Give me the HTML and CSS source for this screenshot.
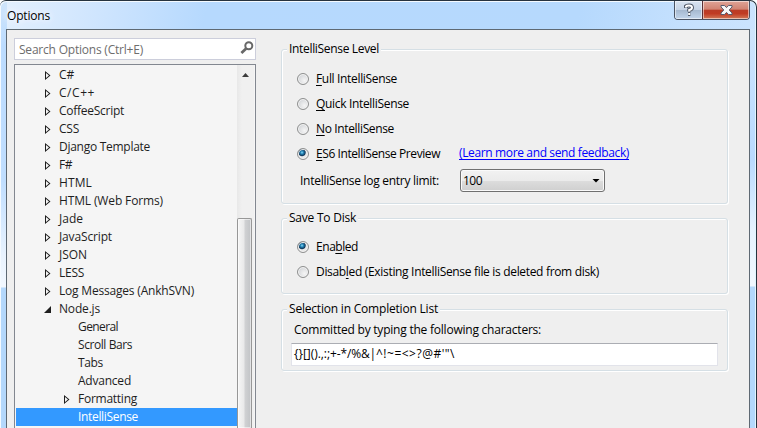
FILE: index.html
```
<!DOCTYPE html>
<html lang="en">
<head>
<meta charset="utf-8">
<title>Options</title>
<link rel="stylesheet" href="styles.css">
</head>
<body>
<div class="window">
  <header class="titlebar">
    <h1 class="t" data-w="43">Options</h1>
    <div class="caption">
      <button class="help" aria-label="Help"><svg width="12" height="14" viewBox="0 0 12 14"><path d="M3 5V3.2Q3.6 2.4 6 2.4Q9 2.4 9 4.7Q9 6.2 6.2 7V8.6M5 11H7.4" fill="none" stroke="#525a69" stroke-width="4"/><path d="M3 4.6V3.4Q3.6 2.4 6 2.4Q9 2.4 9 4.7Q9 6.2 6.2 7V8.4M5.2 11H7.2" fill="none" stroke="#fff" stroke-width="2"/></svg></button>
      <button class="close" aria-label="Close"><svg width="13" height="12" viewBox="0 0 13 12"><path d="M1 1.5H4.5L6.5 3.6L8.5 1.5H12V3L9.2 6L12 9V10.5H8.5L6.5 8.4L4.5 10.5H1V9L3.8 6L1 3Z" fill="#f7f7f7" stroke="#575a6c"/></svg></button>
    </div>
  </header>
  <main class="client">
    <aside class="sidebar">
      <div class="search"><span class="t" data-w="124">Search Options (Ctrl+E)</span><svg width="14" height="14" viewBox="0 0 14 14"><circle cx="8.8" cy="4.8" r="3.5" fill="none" stroke="#686868" stroke-width="2"/><path d="M6.2 7.5L1.4 12" stroke="#686868" stroke-width="2.8"/></svg></div>
      <div class="tree">
        <ul>
          <li><i></i><span class="t" data-w="15">C#</span></li>
          <li><i></i><span class="t" data-w="36">C/C++</span></li>
          <li><i></i><span class="t" data-w="65">CoffeeScript</span></li>
          <li><i></i><span class="t" data-w="20">CSS</span></li>
          <li><i></i><span class="t" data-w="91">Django Template</span></li>
          <li><i></i><span class="t" data-w="13">F#</span></li>
          <li><i></i><span class="t" data-w="33">HTML</span></li>
          <li><i></i><span class="t" data-w="104">HTML (Web Forms)</span></li>
          <li><i></i><span class="t" data-w="24">Jade</span></li>
          <li><i></i><span class="t" data-w="53">JavaScript</span></li>
          <li><i></i><span class="t" data-w="28">JSON</span></li>
          <li><i></i><span class="t" data-w="25">LESS</span></li>
          <li><i></i><span class="t" data-w="135">Log Messages (AnkhSVN)</span></li>
          <li class="open"><i></i><span class="t" data-w="41">Node.js</span></li>
          <li class="sub leaf"><i></i><span class="t" data-w="40">General</span></li>
          <li class="sub leaf"><i></i><span class="t" data-w="54">Scroll Bars</span></li>
          <li class="sub leaf"><i></i><span class="t" data-w="25">Tabs</span></li>
          <li class="sub leaf"><i></i><span class="t" data-w="53">Advanced</span></li>
          <li class="sub"><i></i><span class="t" data-w="59">Formatting</span></li>
          <li class="sub leaf selected"><i></i><span class="t" data-w="60">IntelliSense</span></li>
        </ul>
        <div class="scrollbar"><div class="up"></div><div class="thumb"></div></div>
      </div>
    </aside>
    <section class="panel">
      <fieldset class="level">
        <legend><span class="t" data-w="90">IntelliSense Level</span></legend>
        <div class="radio"><i></i><span class="t" data-w="81"><u>F</u>ull IntelliSense</span></div>
        <div class="radio"><i></i><span class="t" data-w="93"><u>Q</u>uick IntelliSense</span></div>
        <div class="radio"><i></i><span class="t" data-w="78"><u>N</u>o IntelliSense</span></div>
        <div class="radio on"><i></i><span class="t" data-w="124"><u>E</u>S6 IntelliSense Preview</span><a class="link t" data-w="170">(Learn more and send feedback)</a></div>
        <div class="limit"><label class="t" data-w="139">IntelliSense log entry limit:</label><div class="select"><span class="t" data-w="19">100</span><b></b></div></div>
      </fieldset>
      <fieldset class="save">
        <legend><span class="t" data-w="67">Save To Disk</span></legend>
        <div class="radio on"><i></i><span class="t" data-w="42">Ena<u>b</u>led</span></div>
        <div class="radio"><i></i><span class="t" data-w="283">Disab<u>l</u>ed (Existing IntelliSense file is deleted from disk)</span></div>
      </fieldset>
      <fieldset class="chars">
        <legend><span class="t" data-w="149">Selection in Completion List</span></legend>
        <label><span class="t" data-w="247">Committed by typing the following characters:</span></label>
        <div class="input"><span class="t" data-w="36">{}[]().,:;</span><span class="t" data-w="46">+-*/%&amp;|</span><span class="t" data-w="79">^!~=&lt;&gt;?@#'"\</span></div>
      </fieldset>
    </section>
  </main>
</div>
<script src="fit.js"></script>
</body>
</html>
```
FILE: fit.js
```
document.querySelectorAll('.t').forEach(function (el) {
  var gap = el.dataset.w - el.getBoundingClientRect().width;
  el.style.letterSpacing = gap / el.textContent.length + 'px';
});
```
FILE: styles.css
```
* { box-sizing: border-box; }
body {
  margin: 0;
  overflow: hidden;
  background: #fff;
  font: 12px/18px "Open Sans", "Noto Sans", sans-serif;
  color: #000;
}
.t { display: inline-block; white-space: nowrap; flex: none; }
ul { margin: 0; padding: 0; list-style: none; }
.window {
  height: 428px;
  padding: 0 6px;
  display: flex;
  flex-direction: column;
  border: solid #26333f;
  border-width: 1px 1px 0 0;
  border-radius: 6px 7px 0 0;
  background:
    linear-gradient(#cfe5fb, #bcdcff 45px, #c0deff 180px, #e9f3fe 255px, #f2f8ff 286px, #b4d8fc 287px) left 28px / 7px 100% no-repeat,
    linear-gradient(#cfe5fb, #c3e0ff 60px, #b9daff 130px, #e5f2ff 200px, #f1f8ff 257px, #b4d8fc 258px) right 28px / 8px 100% no-repeat,
    linear-gradient(100deg, #e3f0fe, #cfe5fe 12%, #b6d9fe 25%, #b6d9fd 70%, #c6e1fe 84%, #d0e6fd);
  background-position: left top, right 0 top 28px, left top;
  box-shadow: inset 1px 1px 0 #f4faff, inset -1px 0 0 #e1f5ff;
}
.titlebar { height: 28px; display: flex; justify-content: space-between; flex: none; }
h1 { margin: 5px 0 0 1px; font-size: 12px; line-height: 19px; font-weight: normal; text-shadow: 0 0 7px #fff, 0 0 9px #fff; }
.caption { display: flex; height: 19px; border: 1px solid #4a5363; border-top: 0; border-radius: 0 0 4px 4px; overflow: hidden; }
button { border: 0; padding: 0; display: flex; align-items: center; justify-content: center; box-shadow: inset 0 0 0 1px #ffffff88; }
.help { width: 27px; background: linear-gradient(#d9e3f0, #c6d4e6 48%, #a6b9d0 52%, #c2d5eb); }
.close { width: 47px; border-left: 1px solid #5b3035; background: linear-gradient(#dfa497, #d18372 46%, #b93c26 50%, #c03b23 70%, #d27a58); }
.client { flex: 1; min-height: 0; display: flex; background: #efefef; border: solid #5e6973; border-width: 1px 1px 0; }
.sidebar { width: 242px; margin: 8px 0 0 7px; display: flex; flex-direction: column; gap: 4px; flex: none; }
.search { height: 22px; border: 1px solid #ccceDB; background: #fff; color: #6d6d6d; display: flex; justify-content: space-between; padding: 2px 1px 0 4px; flex: none; }
.tree { flex: 1; min-height: 0; display: flex; overflow: hidden; border: 1px solid #828790; border-bottom: 0; background: #f5f5f5; padding-left: 1px; }
.tree ul { width: 221px; padding-top: 1px; color: #1e1e1e; }
li { height: 18px; display: flex; align-items: center; padding-left: 28px; }
.sub { padding-left: 47px; }
li i { width: 15px; height: 9px; margin-top: 1px; flex: none; display: flex; }
li i::before { content: ""; width: 6px; height: 9px; margin-left: 1px; background: #1e1e1e; clip-path: polygon(evenodd, 0 0, 5.5px 4.5px, 0 9px, 0 0, 1px 2px, 1px 7px, 4px 4.5px, 1px 2px); }
.leaf i::before { display: none; }
.open i::before { width: 7px; height: 7px; margin: 1px 0 0; clip-path: polygon(100% 0, 100% 100%, 0 100%); }
.tree .selected { background: #3399ff; color: #fff; }
.scrollbar { width: 17px; background: linear-gradient(90deg, #e8e8e8, #f0f0f0 5px); display: flex; flex-direction: column; align-items: flex-start; }
.up { height: 153px; width: 16px; padding: 8px 0 0 5px; flex: none; }
.up::before { content: ""; display: block; width: 7px; height: 4px; background: #3c3c3c; clip-path: polygon(50% 0, 100% 100%, 0 100%); }
.thumb { width: 15px; flex: 1; border: 1px solid #979797; border-bottom: 0; border-radius: 2px 2px 0 0; background: linear-gradient(90deg, #f6f6f6, #e9e9ea 45%, #d0d1d3 55%, #c1c3c6); box-shadow: inset 0 0 0 1px #fff8; }
.panel { width: 447px; margin: 12px 0 0 25px; }
fieldset { min-width: 0; margin: 0; padding: 0; border: 1px solid #d5dfe5; border-radius: 3px; box-shadow: 1px 1px 0 #fff, inset 1px 1px 0 #fff; display: flow-root; }
legend { float: left; height: 18px; margin: -10px 0 0 5px; padding: 0 2px; background: #efefef; }
legend + * { clear: both; }
.level { height: 155px; margin-top: 7px; }
.save { height: 76px; margin-top: 14px; }
.chars { height: 62px; margin-top: 15px; }
.radio { height: 25px; padding-left: 15px; display: flex; align-items: center; }
.radio i { width: 12px; height: 12px; margin-right: 7px; flex: none; border: 1px solid #8e8f8f; border-radius: 50%; background: radial-gradient(circle at 65% 65%, #f5f5f5, #d5d7da 70%); box-shadow: inset 0 0 0 1px #f4f4f4; }
.radio .t { padding-top: 1px; }
.on i { background: radial-gradient(circle at 40% 35%, #8fd8f5 0, #2386b8 1.5px, #10385b 3.2px, #e8e8e8 4.2px); }
u { text-decoration: underline; text-underline-offset: 2px; text-decoration-thickness: 1px; text-decoration-skip-ink: none; }
.level legend { margin-bottom: 8px; }
.save legend { margin-bottom: 7px; }
.link { color: #0000ff; text-decoration: underline; text-underline-offset: 2px; text-decoration-skip-ink: none; margin: -3px 0 0 19px; }
.limit { display: flex; align-items: center; margin: 3px 0 0 18px; }
.select { width: 145px; height: 23px; margin-left: 21px; padding: 0 4px 0 2px; display: flex; align-items: center; justify-content: space-between; border: 1px solid #707070; border-radius: 3px; background: linear-gradient(#f2f2f2, #ebebeb 50%, #dddddd 51%, #cfcfcf); box-shadow: inset 0 0 0 1px #fafafa; }
.select b { width: 8px; height: 4px; background: #000; clip-path: polygon(0 0, 100% 0, 50% 100%); }
.chars label { display: block; margin-left: 12px; padding-top: 3px; height: 25px; }
.input { width: 427px; height: 23px; margin-left: 9px; padding: 1px 2px; border: 1px solid #e2e3ea; border-top-color: #abadb3; background: #fff; }
```
